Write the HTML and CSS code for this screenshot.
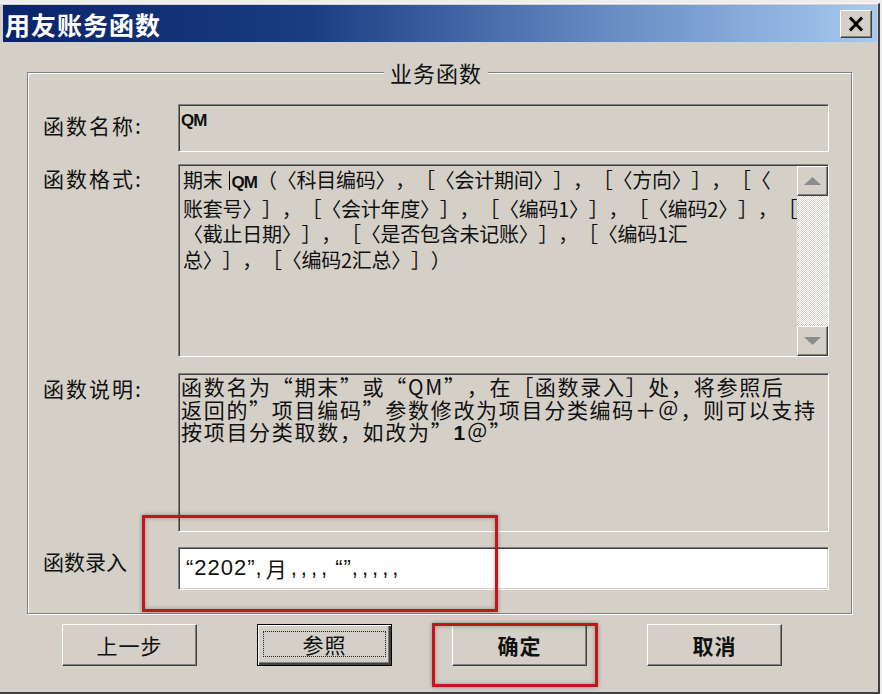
FILE: index.html
```html
<!DOCTYPE html>
<html>
<head>
    <meta charset="utf-8">
    <link rel="stylesheet" href="styles.css">
</head>
<body>
    <div class="window">
        <div class="title-bar">
            <span class="title-text">用友账务函数</span>
            <button class="close-button">
                <svg width="16" height="16" viewBox="0 0 16 16">
                    <path d="M2 1.5 L14 14.5 M14 1.5 L2 14.5" stroke="#000" stroke-width="3" fill="none"/>
                </svg>
            </button>
        </div>

        <fieldset class="func-group">
            <legend>业务函数</legend>

            <div class="form-row row-name">
                <div class="field-label">函数名称:</div>
                <div class="field sunken name-field">QM</div>
            </div>

            <div class="form-row row-format">
                <div class="field-label">函数格式:</div>
                <div class="field sunken format-field">
                    <div class="format-text">
                        <div>期末<span class="caret"></span><span class="narrow">QM</span>（〈科目编码〉，［〈会计期间〉］，［〈方向〉］，［〈</div>
                        <div>账套号〉］，［〈会计年度〉］，［〈编码1〉］，［〈编码2〉］，［</div>
                        <div>〈截止日期〉］，［〈是否包含未记账〉］，［〈编码1汇</div>
                        <div>总〉］，［〈编码2汇总〉］）</div>
                    </div>
                    <div class="scrollbar">
                        <div class="scroll-button">
                            <svg width="17" height="8" viewBox="0 0 17 8"><path d="M0 8 L8.5 0 L17 8Z" fill="#8c8c8c"/></svg>
                        </div>
                        <div class="scroll-track"></div>
                        <div class="scroll-button">
                            <svg width="17" height="8" viewBox="0 0 17 8"><path d="M0 0 L8.5 8 L17 0Z" fill="#8c8c8c"/></svg>
                        </div>
                    </div>
                </div>
            </div>

            <div class="form-row row-desc">
                <div class="field-label">函数说明:</div>
                <div class="field sunken desc-field">
                    <div>函数名为“期末”或“QM”，在［函数录入］处，将参照后</div>
                    <div>返回的”项目编码”参数修改为项目分类编码＋＠，则可以支持</div>
                    <div>按项目分类取数，如改为”<b>1</b>＠”</div>
                </div>
            </div>

            <div class="form-row row-input">
                <div class="field-label">函数录入</div>
                <div class="field sunken input-field">“2202”,<span class="cjk">月</span><span class="commas">,,,,</span>“”<span class="commas">,,,,,</span></div>
            </div>
        </fieldset>

        <div class="button-row">
            <button class="dlg-button">上一步</button>
            <button class="dlg-button default-button"><span class="focus-rect">参照</span></button>
            <button class="dlg-button strong">确定</button>
            <button class="dlg-button strong">取消</button>
        </div>

        <!-- red highlight boxes drawn over the dialog -->
        <div class="mark mark-input"></div>
        <div class="mark mark-ok"></div>
    </div>
</body>
</html>
```

FILE: styles.css
```css
/* Page */
body {
    margin: 0;
    background-color: #ededed;
    font-family: "Noto Sans CJK SC", sans-serif;
    color: #111;
    text-spacing-trim: space-all;
}

/* Dialog window */
.window {
    position: relative;
    width: 878px;
    height: 687px;
    margin-top: 3px;
    padding-top: 1px;
    background-color: #d4d0c8;
    border-top: 1px solid #f6f6f6;
    border-right: 2px solid #404040;
    border-bottom: 2px solid #404040;
}

.title-bar {
    display: flex;
    align-items: center;
    justify-content: space-between;
    height: 37px;
    margin: 0 1px 0 3px;
    padding: 0 5px 0 2px;
    background: linear-gradient(90deg, #0a246a 0%, #1a3c82 35%, #5f82bd 65%, #a6caf0 100%);
}

.title-text {
    color: #fff;
    font-size: 25px;
    font-weight: 700;
    letter-spacing: 1px;
    line-height: 30px;
}

.close-button {
    display: flex;
    align-items: center;
    justify-content: center;
    width: 32px;
    height: 28px;
    padding: 0;
    background-color: #d4d0c8;
    border: 1px solid;
    border-color: #fff #404040 #404040 #fff;
    box-shadow: inset -1px -1px #808080;
}

/* Group box */
.func-group {
    width: 825px;
    box-sizing: border-box;
    min-width: 0;
    margin: 18px 0 0 27px;
    padding: 20px 22px 23px 15px;
    border: 1px solid #808080;
    box-shadow: inset 1px 1px #fff, 1px 1px #fff;
}

.func-group legend {
    margin: 0 auto;
    padding: 0 6px;
    font-size: 22px;
    line-height: 24px;
    letter-spacing: 1px;
    background-color: #d4d0c8;
}

.form-row {
    display: flex;
}

.field-label {
    width: 135px;
    flex-shrink: 0;
    font-size: 21px;
    line-height: 24px;
    letter-spacing: 2px;
}

.field {
    flex: 1;
    box-sizing: border-box;
    overflow: hidden;
}

.sunken {
    border: 1px solid;
    border-color: #808080 #fff #fff #808080;
    box-shadow: inset 1px 1px #404040, inset -1px -1px #d4d0c8;
}

/* 名称 */
.row-name .field-label {
    margin-top: 9px;
}

.name-field {
    height: 48px;
    padding: 7px 0 0 2px;
    font-family: "Liberation Sans", sans-serif;
    font-size: 17px;
    font-weight: 700;
    line-height: 18px;
    letter-spacing: -1px;
}

/* 格式 */
.row-format {
    margin-top: 12px;
}

.row-format .field-label {
    margin-top: 2px;
}

.format-field {
    display: flex;
    height: 193px;
}

.format-text {
    flex: 1;
    padding: 2px 0 0 4px;
    font-size: 20px;
    line-height: 25.5px;
    letter-spacing: -0.25px;
    white-space: nowrap;
    overflow: hidden;
}

.narrow {
    font-family: "Liberation Sans", sans-serif;
    font-size: 17px;
    font-weight: 700;
    letter-spacing: -1px;
}

.caret {
    display: inline-block;
    width: 1px;
    height: 19px;
    margin: 0 2px 0 6px;
    background-color: #000;
    vertical-align: -2px;
}

.scrollbar {
    display: flex;
    flex-direction: column;
    width: 31px;
    margin-top: 1px;
}

.scroll-button {
    display: flex;
    align-items: center;
    justify-content: center;
    height: 30px;
    box-sizing: border-box;
    background-color: #d4d0c8;
    border: 1px solid;
    border-color: #fff #404040 #404040 #fff;
    box-shadow: inset -1px -1px #808080;
}

.scroll-track {
    flex: 1;
    background: repeating-conic-gradient(#fff 0 25%, #d4d0c8 0 50%) 0 0 / 2px 2px;
}

/* 说明 */
.row-desc {
    margin-top: 16px;
}

.row-desc .field-label {
    margin-top: 3px;
}

.desc-field {
    height: 159px;
    padding: 1px 0 0 2px;
    font-size: 21px;
    line-height: 22.5px;
    letter-spacing: 1.7px;
    white-space: nowrap;
}

.desc-field b {
    font-family: "Liberation Sans", sans-serif;
}

/* 录入 */
.row-input {
    margin-top: 15px;
}

.row-input .field-label {
    margin-top: 2px;
    letter-spacing: 0;
}

.input-field {
    display: flex;
    align-items: center;
    height: 43px;
    padding: 0 0 2px 7px;
    background-color: #fff;
    font-family: "Liberation Sans", sans-serif;
    font-size: 22px;
    letter-spacing: 1px;
}

.input-field .cjk {
    font-family: "Noto Sans CJK SC", sans-serif;
    font-size: 21px;
    margin: 0 3px;
}

.commas {
    letter-spacing: 4px;
    margin-right: 4px;
}

/* Buttons */
.button-row {
    display: flex;
    gap: 60px;
    margin: 10px 0 0 62px;
}

.dlg-button {
    display: flex;
    align-items: center;
    justify-content: center;
    width: 135px;
    height: 42px;
    padding: 0;
    background-color: #d4d0c8;
    border: 1px solid;
    border-color: #fff #404040 #404040 #fff;
    box-shadow: inset -1px -1px #808080;
    font-family: "Noto Sans CJK SC", sans-serif;
    font-size: 21px;
    color: #111;
    letter-spacing: 1px;
}

.dlg-button.strong {
    font-weight: 700;
}

.default-button {
    align-items: stretch;
    padding: 6px 5px 8px;
    border: 1px solid #000;
    box-shadow: inset 1px 1px #fff, inset -2px -2px #404040, inset -3px -3px #808080;
}

.focus-rect {
    display: flex;
    align-items: center;
    justify-content: center;
    flex: 1;
    border: 1px dotted #222;
    line-height: 20px;
}

/* Red highlight boxes */
.mark {
    position: absolute;
    border: 3px solid #c3161c;
    box-shadow: 0 0 4px rgba(0, 0, 0, 0.35), inset 0 0 4px rgba(0, 0, 0, 0.3);
}

.mark-input {
    left: 142px;
    top: 511px;
    width: 350px;
    height: 91px;
}

.mark-ok {
    left: 432px;
    top: 619px;
    width: 160px;
    height: 58px;
}
```
